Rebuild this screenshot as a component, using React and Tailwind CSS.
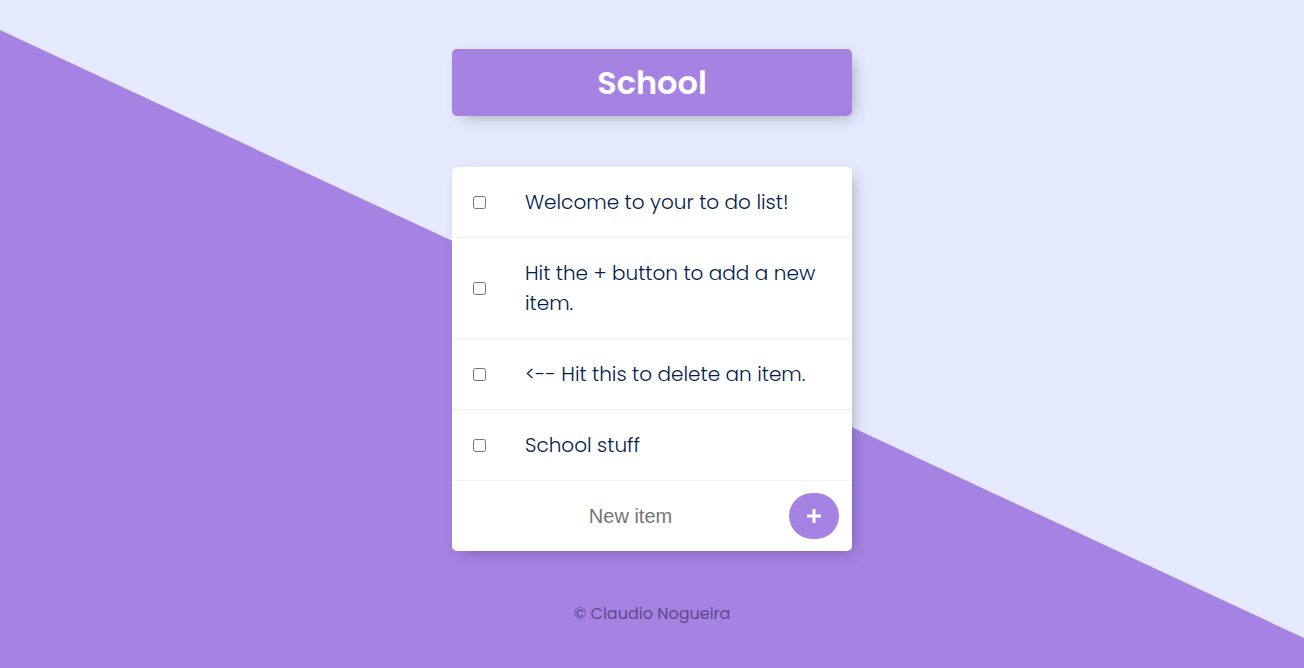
const items = [
  "Welcome to your to do list!",
  "Hit the + button to add a new item.",
  "<-- Hit this to delete an item.",
  "School stuff",
];

export default function App() {
  return (
    <div className="relative min-h-screen h-[668px] overflow-hidden bg-[#E4E9FD] font-['Poppins','Open_Sans',sans-serif]">
      {/* diagonal backdrop */}
      <div className="absolute inset-0 bg-[#A683E3] [clip-path:polygon(0_30px,100%_638px,100%_100%,0_100%)]" />

      <div className="relative flex flex-col items-center pt-[49px]">
        <div className="flex h-[67px] w-[400px] items-center justify-center rounded-[5px] bg-[#A683E3] shadow-[5px_5px_15px_-5px_rgba(0,0,0,0.3)]">
          <h1 className="text-[32px] font-semibold text-white">School</h1>
        </div>

        <div className="mt-[51px] w-[400px] overflow-hidden rounded-[5px] bg-white shadow-[5px_5px_15px_-5px_rgba(0,0,0,0.3)]">
          {items.map((text) => (
            <div key={text} className="flex items-center border-b border-[#F1F1F1] py-5">
              <input type="checkbox" className="ml-[21px] mr-[39px] h-[13px] w-[13px] shrink-0" />
              <p className="pr-[30px] text-[20px] font-light leading-[30px] text-[#00204a]">{text}</p>
            </div>
          ))}
          <div className="flex h-[70px] items-center">
            <input
              type="text"
              placeholder="New item"
              className="min-w-0 flex-1 pl-5 text-center font-['Liberation_Sans',Arial,sans-serif] text-[20px] text-[#333] outline-none placeholder:text-[#757575]"
            />
            <button className="mr-[13px] flex h-[46px] w-[50px] shrink-0 items-center justify-center rounded-full bg-[#A683E3]">
              <svg width="16" height="16" viewBox="0 0 16 16" fill="none" stroke="white" strokeWidth="3">
                <path d="M8 1v14M1 8h14" />
              </svg>
            </button>
          </div>
        </div>

        <footer className="mt-[51px] text-[16px] text-[#5F4A8B]">© Claudio Nogueira</footer>
      </div>
    </div>
  );
}
